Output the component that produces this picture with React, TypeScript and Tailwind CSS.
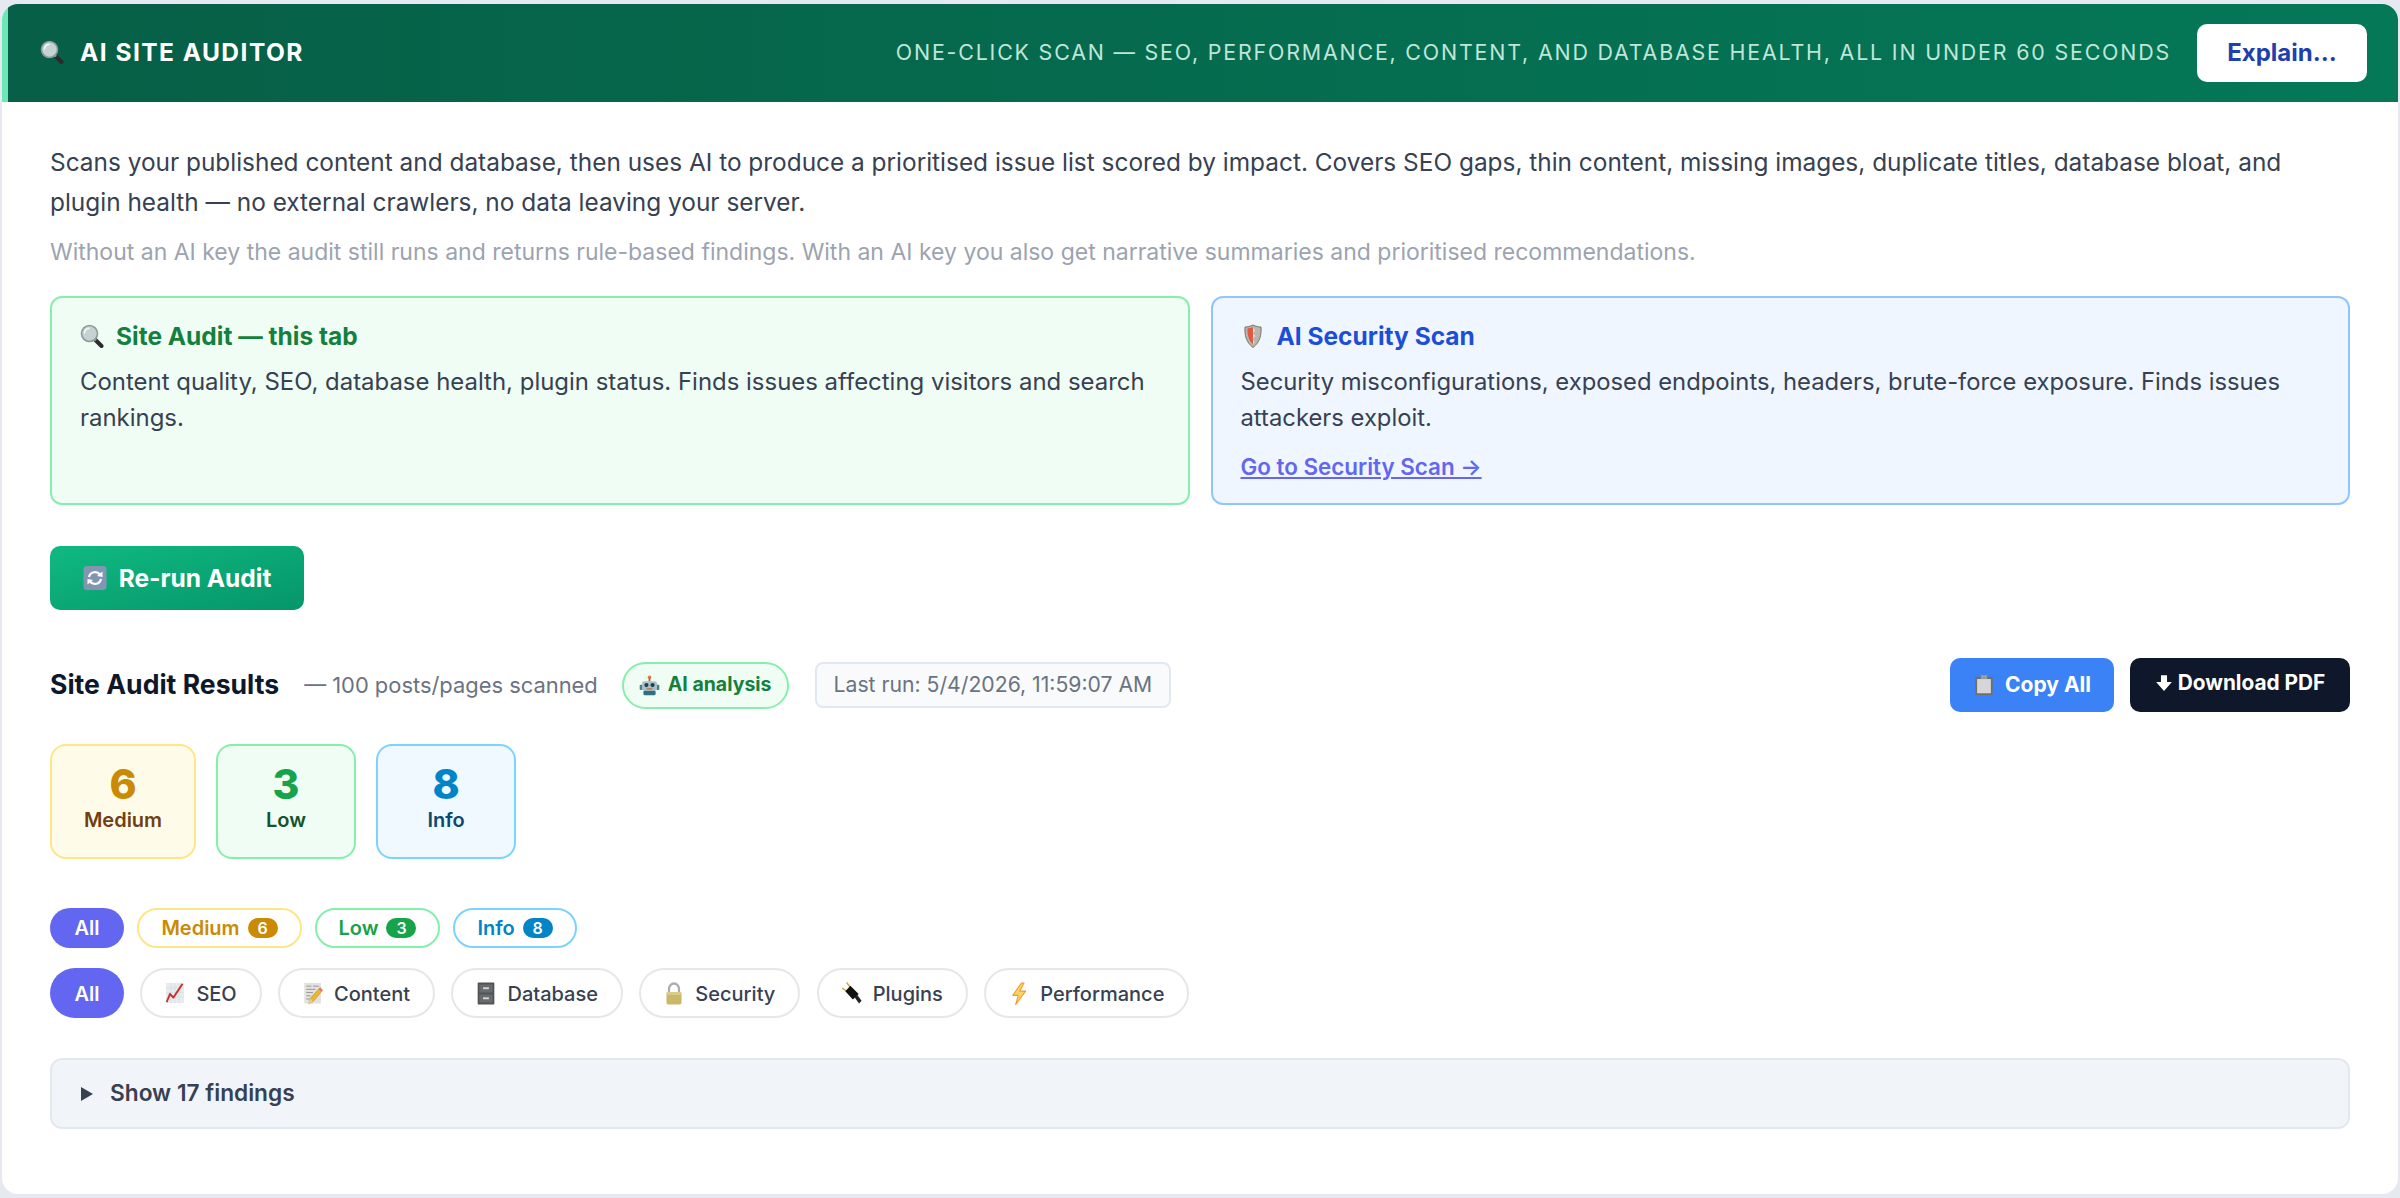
import React from "react";

type IconProps = { className?: string };

const Magnifier = ({ className = "w-[24px] h-[24px]" }: IconProps) => (
  <svg viewBox="0 0 24 24" className={className}>
    <path d="M14 14.5 L21.5 22" stroke="#2b2b2b" strokeWidth="4" strokeLinecap="round" />
    <path d="M13.5 14 L16 16.5" stroke="#9a9a9a" strokeWidth="2.4" />
    <circle cx="9.5" cy="9.5" r="8" fill="#c4d3d2" stroke="#8d9a9a" strokeWidth="1.6" />
    <path d="M4.5 9 A5 5 0 0 1 9 4.4" stroke="#f1f6f6" strokeWidth="1.6" fill="none" strokeLinecap="round" />
  </svg>
);

const Shield = ({ className = "w-[24px] h-[24px]" }: IconProps) => (
  <svg viewBox="0 0 24 24" className={className}>
    <path d="M12 1 C15 2.5 17.5 3 20 3 C20.5 11 19 18 12 23.5 C5 18 3.5 11 4 3 C6.5 3 9 2.5 12 1 Z" fill="#b9b6ae" stroke="#77736c" strokeWidth="1" />
    <path d="M12 3 C9.5 4 8 4.4 6.5 4.5 C6.3 10.5 7.5 16 12 20.5 Z" fill="#e2583e" />
    <path d="M12 3 L14 7 L11.5 9 L14.5 12 L11.5 14.5 L13.5 18 L12 20.5 Z" fill="#e9e6df" />
  </svg>
);

const Refresh = ({ className = "w-[24px] h-[24px]" }: IconProps) => (
  <svg viewBox="0 0 24 24" className={className}>
    <rect x="0.5" y="0" width="23" height="24" rx="3.5" fill="#8296b4" />
    <path d="M6 11 A6.2 6.2 0 0 1 17 8.5" stroke="#fff" strokeWidth="2.2" fill="none" />
    <path d="M19.5 5.5 L19.5 11 L14 10 Z" fill="#fff" />
    <path d="M18 13 A6.2 6.2 0 0 1 7 15.5" stroke="#fff" strokeWidth="2.2" fill="none" />
    <path d="M4.5 18.5 L4.5 13 L10 14 Z" fill="#fff" />
  </svg>
);

const Robot = ({ className = "w-[22px] h-[22px]" }: IconProps) => (
  <svg viewBox="0 0 24 24" className={className}>
    <circle cx="12" cy="2.6" r="2" fill="#e07b39" />
    <rect x="11" y="3.5" width="2" height="4" fill="#8c6a50" />
    <rect x="0.8" y="11" width="3.4" height="6" rx="1" fill="#4a7f8c" />
    <rect x="19.8" y="11" width="3.4" height="6" rx="1" fill="#4a7f8c" />
    <rect x="3.5" y="7" width="17" height="11" rx="2.5" fill="#a9c2c9" />
    <circle cx="8.5" cy="11.5" r="2.4" fill="#24404c" />
    <circle cx="15.5" cy="11.5" r="2.4" fill="#24404c" />
    <rect x="8.5" y="15" width="7" height="1.6" rx="0.8" fill="#c76b3a" />
    <rect x="5" y="18" width="14" height="5" rx="1.5" fill="#2f6f85" />
  </svg>
);

const Clipboard = ({ className = "w-[22px] h-[22px]" }: IconProps) => (
  <svg viewBox="0 0 24 24" className={className}>
    <rect x="2.5" y="3" width="19" height="20" rx="1.5" fill="#6f6f72" />
    <rect x="4.5" y="5.5" width="15" height="15.5" fill="#d6d6d6" />
    <rect x="8.5" y="1" width="7" height="4.5" rx="1" fill="#9b9b9e" />
  </svg>
);

const Chart = ({ className = "w-[20px] h-[22px]" }: IconProps) => (
  <svg viewBox="0 0 24 24" className={className} preserveAspectRatio="none">
    <rect x="1" y="1" width="22" height="22" fill="#e8ecef" />
    <path d="M1 6.5H23M1 11.5H23M1 16.5H23M7 1V23M12 1V23M17 1V23" stroke="#d3d9df" strokeWidth="0.6" />
    <path d="M2 22 L6 13 L10 17 L21 2" stroke="#c9302c" strokeWidth="2.2" fill="none" strokeLinejoin="round" />
  </svg>
);

const Memo = ({ className = "w-[20px] h-[22px]" }: IconProps) => (
  <svg viewBox="0 0 24 24" className={className} preserveAspectRatio="none">
    <rect x="1.5" y="1" width="20" height="22.5" fill="#e4e2dc" />
    <path d="M4 4.5H10M12 4.5H19M4 8H15M4 11.5H12M4 15H9M4 18.5H8" stroke="#8a8f94" strokeWidth="1" />
    <path d="M20.5 6 L23.5 9 L12 21.5 L7 23.5 L8.5 18 Z" fill="#eeb52f" stroke="#b77f1e" strokeWidth="0.6" />
    <path d="M20.5 6 L23.5 9 L22 10.8 L18.8 7.8 Z" fill="#e77a6e" />
    <path d="M8.5 18 L7 23.5 L12 21.5 Z" fill="#e7d1a8" />
  </svg>
);

const Cabinet = ({ className = "w-[20px] h-[23px]" }: IconProps) => (
  <svg viewBox="0 0 24 24" className={className} preserveAspectRatio="none">
    <rect x="2" y="0.5" width="20" height="23" rx="1" fill="#4f5356" />
    <rect x="4" y="2.5" width="16" height="8.5" fill="#686c6f" />
    <rect x="4" y="13" width="16" height="8.5" fill="#686c6f" />
    <rect x="8.5" y="5.5" width="7" height="2" fill="#d4d6d8" />
    <rect x="8.5" y="16" width="7" height="2" fill="#d4d6d8" />
  </svg>
);

const Lock = ({ className = "w-[20px] h-[23px]" }: IconProps) => (
  <svg viewBox="0 0 24 24" className={className} preserveAspectRatio="none">
    <path d="M6 12 V7.5 A6 6 0 0 1 18 7.5 V12" stroke="#a9adb3" strokeWidth="2.6" fill="none" />
    <rect x="3" y="10.5" width="18" height="13" rx="2" fill="#c9b76b" />
    <rect x="3" y="10.5" width="18" height="3" rx="1.5" fill="#dccc86" />
  </svg>
);

const Plug = ({ className = "w-[20px] h-[22px]" }: IconProps) => (
  <svg viewBox="0 0 24 24" className={className} preserveAspectRatio="none">
    <path d="M0.8 7 L7 11 M6 1 L11 7" stroke="#c9a94e" strokeWidth="1.8" strokeLinecap="round" />
    <path d="M10 4 L4 10 L13 19 L20 13 Z" fill="#111" />
    <path d="M15 16.5 L18 13.5 L23.5 20.5 L20.5 23.5 Z" fill="#222" />
  </svg>
);

const Zap = ({ className = "w-[20px] h-[23px]" }: IconProps) => (
  <svg viewBox="0 0 24 24" className={className} preserveAspectRatio="none">
    <path d="M15 1 L4.5 14 H11 L8 23.5 L20 9.5 H13 L18 1 Z" fill="#fcd36a" stroke="#ee9d2b" strokeWidth="1.2" strokeLinejoin="round" />
  </svg>
);

const Down = () => (
  <svg viewBox="0 0 16 16" className="h-[18px] w-[18px]">
    <path d="M5.3 1 H10.7 V7.2 H15 L8 15 L1 7.2 H5.3 Z" fill="#fff" />
  </svg>
);

const Count = ({ n, c }: { n: number; c: string }) => (
  <span className={`${c} ml-[8px] inline-flex h-[20px] w-[30px] items-center justify-center rounded-full text-[16px] font-semibold leading-none text-white`}>
    {n}
  </span>
);

const Tag = ({ icon, label }: { icon: React.ReactNode; label: string }) => (
  <button className="flex h-[50px] items-center gap-[11px] rounded-full border-2 border-[#e5e7eb] bg-white px-[23px] text-[20px] font-medium text-[#374151]">
    {icon}
    <span className="pt-[2px]">{label}</span>
  </button>
);

const Stat = ({ n, label, box, num, txt }: { n: number; label: string; box: string; num: string; txt: string }) => (
  <div className={`${box} flex h-[115px] flex-col items-center justify-center rounded-[16px] border-2 pb-[8px]`}>
    <span className={`${num} text-[41px] font-extrabold leading-[46px]`}>{n}</span>
    <span className={`${txt} text-[20px] font-semibold leading-[27px]`}>{label}</span>
  </div>
);

export default function App() {
  return (
    <div className="h-[1198px] bg-[#e6e9f2] px-[2px] py-[4px] font-['Inter','Liberation_Sans',sans-serif]">
      <div className="h-[1190px] overflow-hidden rounded-[16px] bg-white">
        <header className="flex h-[98px] items-center justify-between border-l-[6px] border-[#6ee7b7] bg-linear-to-r from-[#065f46] to-[#047857] pl-[32px] pr-[31px]">
          <div className="flex items-center gap-[16px] pb-[2px]">
            <Magnifier className="h-[24px] w-[24px]" />
            <h1 className="text-[24.5px] font-bold tracking-[0.06em] text-white">AI SITE AUDITOR</h1>
          </div>
          <div className="flex items-center gap-[26px]">
            <span className="pb-[1px] text-[21.4px] uppercase tracking-[0.085em] text-[#bfe6d8]">
              One-click scan — SEO, performance, content, and database health, all in under 60 seconds
            </span>
            <button className="h-[58px] w-[170px] rounded-[10px] bg-white text-[24px] font-bold text-[#1e40af]">Explain...</button>
          </div>
        </header>

        <main className="px-[48px] pt-[40px]">
          <p className="text-[24.4px] leading-[40px] text-[#374151]">
            Scans your published content and database, then uses AI to produce a prioritised issue list scored by impact. Covers SEO gaps, thin content, missing images, duplicate titles, database bloat, and plugin health — no external crawlers, no data leaving your server.
          </p>
          <p className="mt-[15px] text-[23px] leading-[30px] text-[#9ca3af]">
            Without an AI key the audit still runs and returns rule-based findings. With an AI key you also get narrative summaries and prioritised recommendations.
          </p>

          <div className="mt-[29px] grid h-[209px] grid-cols-2 gap-[21px]">
            <section className="rounded-[12px] border-2 border-[#86efac] bg-[#f0fdf4] px-[28px] pt-[22px]">
              <h3 className="flex items-center gap-[12px] text-[24.5px] font-bold leading-[32px] text-[#15803d]">
                <Magnifier className="h-[24px] w-[24px]" />
                Site Audit — this tab
              </h3>
              <p className="mt-[12px] text-[23.95px] leading-[36px] text-[#374151]">
                Content quality, SEO, database health, plugin status. Finds issues affecting visitors and search rankings.
              </p>
            </section>
            <section className="rounded-[12px] border-2 border-[#93c5fd] bg-[#eff6ff] px-[28px] pt-[22px]">
              <h3 className="flex items-center gap-[12px] text-[24.5px] font-bold leading-[32px] text-[#1d4ed8]">
                <Shield className="h-[26px] w-[24px]" />
                AI Security Scan
              </h3>
              <p className="mt-[12px] text-[23.8px] leading-[36px] text-[#374151]">
                Security misconfigurations, exposed endpoints, headers, brute-force exposure. Finds issues attackers exploit.
              </p>
              <a className="mt-[18px] block text-[22.4px] font-semibold leading-[26px] text-[#6366f1] underline">Go to Security Scan →</a>
            </section>
          </div>

          <button className="mt-[41px] flex h-[64px] w-[254px] items-center justify-center gap-[12px] rounded-[10px] bg-linear-to-br from-[#10b981] to-[#059669] text-[24.5px] font-bold text-white">
            <Refresh />
            Re-run Audit
          </button>

          <div className="mt-[48px] flex h-[54px] items-center">
            <h2 className="text-[26.6px] font-bold text-[#0f172a]">Site Audit Results</h2>
            <span className="ml-[25px] text-[21.9px] text-[#6b7280]">— 100 posts/pages scanned</span>
            <span className="ml-[24px] flex h-[47px] items-center gap-[8px] rounded-full border-2 border-[#86efac] bg-[#f0fdf4] px-[15px] text-[19.5px] font-bold text-[#15803d]">
              <Robot className="h-[21px] w-[21px]" />
              AI analysis
            </span>
            <span className="ml-[26px] flex h-[46px] items-center rounded-[8px] border-2 border-[#e2e8f0] bg-[#f8fafc] px-[17px] text-[21.2px] text-[#6b7280]">
              Last run: 5/4/2026, 11:59:07 AM
            </span>
            <div className="ml-auto flex gap-[16px]">
              <button className="flex h-[54px] w-[164px] items-center justify-center gap-[10px] rounded-[10px] bg-[#3b82f6] text-[21px] font-bold text-white">
                <Clipboard className="h-[22px] w-[22px]" />
                Copy All
              </button>
              <button className="flex h-[54px] w-[220px] items-center justify-center gap-[5px] rounded-[10px] bg-[#0f172a] pb-[4px] text-[20.8px] font-bold text-white">
                <Down />
                Download PDF
              </button>
            </div>
          </div>

          <div className="mt-[32px] flex gap-[20px]">
            <div className="w-[146px]">
              <Stat n={6} label="Medium" box="border-[#fde68a] bg-[#fefce8]" num="text-[#ca8a04]" txt="text-[#713f12]" />
            </div>
            <div className="w-[140px]">
              <Stat n={3} label="Low" box="border-[#86efac] bg-[#f0fdf4]" num="text-[#16a34a]" txt="text-[#14532d]" />
            </div>
            <div className="w-[140px]">
              <Stat n={8} label="Info" box="border-[#7dd3fc] bg-[#f0f9ff]" num="text-[#0284c7]" txt="text-[#0c4a6e]" />
            </div>
          </div>

          <div className="mt-[49px] flex gap-[13px]">
            <button className="h-[40px] w-[74px] rounded-full bg-[#6366f1] text-[20px] font-semibold text-white">All</button>
            <button className="flex h-[40px] w-[165px] items-center justify-center rounded-full border-2 border-[#fde68a] bg-white text-[20px] font-semibold text-[#ca8a04]">
              Medium
              <Count n={6} c="bg-[#ca8a04]" />
            </button>
            <button className="flex h-[40px] w-[125px] items-center justify-center rounded-full border-2 border-[#86efac] bg-white text-[20px] font-semibold text-[#16a34a]">
              Low
              <Count n={3} c="bg-[#16a34a]" />
            </button>
            <button className="flex h-[40px] w-[124px] items-center justify-center rounded-full border-2 border-[#7dd3fc] bg-white text-[20px] font-semibold text-[#0284c7]">
              Info
              <Count n={8} c="bg-[#0284c7]" />
            </button>
          </div>

          <div className="mt-[20px] flex gap-[16.4px]">
            <button className="h-[50px] w-[74px] rounded-full bg-[#6366f1] pt-[2px] text-[20px] font-semibold text-white">All</button>
            <Tag icon={<Chart />} label="SEO" />
            <Tag icon={<Memo />} label="Content" />
            <Tag icon={<Cabinet />} label="Database" />
            <Tag icon={<Lock />} label="Security" />
            <Tag icon={<Plug />} label="Plugins" />
            <Tag icon={<Zap />} label="Performance" />
          </div>

          <div className="mt-[40px] flex h-[71px] items-center gap-[17px] rounded-[12px] border-2 border-[#e2e8f0] bg-[#f1f5f9] px-[29px]">
            <svg viewBox="0 0 12 14" className="h-[14px] w-[12px]">
              <path d="M0 0 L12 7 L0 14 Z" fill="#374151" />
            </svg>
            <span className="text-[22.7px] font-semibold text-[#374151]">Show 17 findings</span>
          </div>
        </main>
      </div>
    </div>
  );
}
